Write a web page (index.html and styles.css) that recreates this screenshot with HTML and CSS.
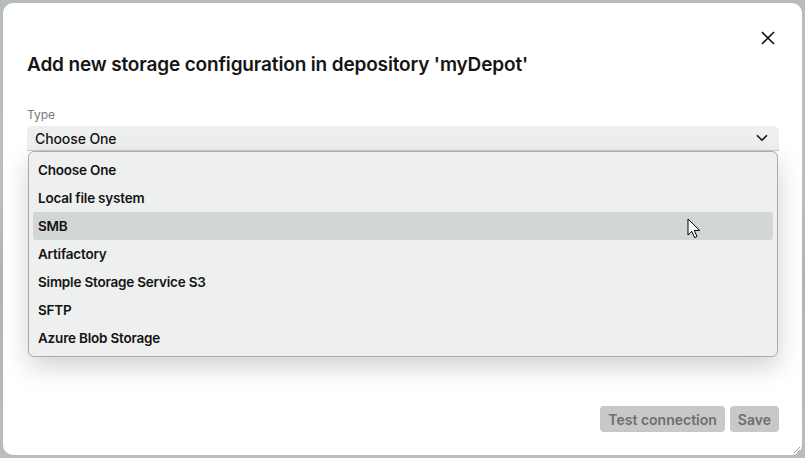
FILE: index.html
```html
<!DOCTYPE html>
<html lang="en">
<head>
<meta charset="utf-8">
<title>Add storage configuration</title>
<link rel="stylesheet" href="styles.css">
</head>
<body>
<div class="backdrop">
  <div class="modal">
    <div class="modal-top">
      <button class="close" aria-label="Close">
        <svg width="14" height="14" viewBox="0 0 14 14"><path d="M1 1L13 13M13 1L1 13" stroke="#111" stroke-width="1.6" fill="none"/></svg>
      </button>
    </div>
    <h1 class="title">Add new storage configuration in depository 'myDepot'</h1>
    <div class="field">
      <label class="label">Type</label>
      <div class="select-wrap">
        <div class="select">
          <span>Choose One</span>
          <svg class="chev" width="12" height="8" viewBox="0 0 12 8"><path d="M1 1.2L6 6.2L11 1.2" stroke="#111" stroke-width="1.6" fill="none"/></svg>
        </div>
        <ul class="menu">
          <li class="item">Choose One</li>
          <li class="item">Local file system</li>
          <li class="item hover">SMB</li>
          <li class="item">Artifactory</li>
          <li class="item">Simple Storage Service S3</li>
          <li class="item">SFTP</li>
          <li class="item">Azure Blob Storage</li>
        </ul>
        <svg class="cursor" width="14" height="21" viewBox="0 0 14 21"><path d="M1 1V17L4.8 13.4L7.6 19.6L10 18.5L7.3 12.4H12.6Z" fill="#fff" stroke="#000" stroke-width="1" stroke-linejoin="round"/></svg>
      </div>
    </div>
    <div class="footer">
      <button class="btn">Test connection</button>
      <button class="btn">Save</button>
    </div>
    <svg class="grip" width="8" height="8" viewBox="0 0 8 8"><path d="M7 1L1 7M7 4L4 7" stroke="#9a9a9a" stroke-width="1"/></svg>
  </div>
</div>
</body>
</html>
```
FILE: styles.css
```css
* { box-sizing: border-box; }
html, body { margin: 0; padding: 0; }
body {
  width: 805px;
  height: 458px;
  overflow: hidden;
  font-family: Inter, "Open Sans", sans-serif;
  color: #161616;
}
.backdrop {
  width: 805px;
  height: 458px;
  padding: 3px;
  background: linear-gradient(180deg, #b6bdba 0%, #b9c0bd 40%, #aeb5b2 60%, #b7bebb 100%);
}
.modal {
  position: relative;
  height: 452px;
  background: #fff;
  border-radius: 10px;
  padding: 0 23px 23px 24px;
  display: flex;
  flex-direction: column;
}
.modal-top {
  display: flex;
  justify-content: flex-end;
  padding-top: 28px;
  margin-right: 4px;
  height: 43px;
}
.close {
  border: 0;
  background: transparent;
  padding: 0;
  width: 14px;
  height: 14px;
  display: flex;
}
.title {
  margin: 7px 0 0 0;
  font-size: 19px;
  font-weight: 600;
  line-height: 24px;
  letter-spacing: -0.15px;
  color: #151515;
}
.field {
  margin-top: 31px;
  display: flex;
  flex-direction: column;
}
.label {
  font-size: 12px;
  line-height: 14px;
  color: #7a7a7a;
  margin-bottom: 4px;
}
.select-wrap { position: relative; }
.select {
  height: 25px;
  background: #eef0ef;
  border-radius: 5px 5px 0 0;
  border-bottom: 1px solid #c9cbca;
  display: flex;
  align-items: center;
  justify-content: space-between;
  padding: 0 11px 0 8px;
  font-size: 14px;
  font-weight: 500;
  letter-spacing: -0.1px;
  color: #151515;
}
.chev { display: block; }
.menu {
  position: absolute;
  top: 25px;
  left: 1px;
  right: 1px;
  margin: 0;
  padding: 4px;
  list-style: none;
  background: #edf0ef;
  border: 1px solid #aaabaa;
  border-radius: 6px;
  box-shadow: 0 10px 26px rgba(0, 0, 0, 0.18);
  z-index: 2;
}
.item {
  height: 28px;
  line-height: 28px;
  padding-left: 5px;
  font-size: 13.5px;
  font-weight: 600;
  letter-spacing: -0.2px;
  color: #141414;
  border-radius: 3px;
}
.item.hover { background: #d2d6d5; }
.cursor {
  position: absolute;
  left: 660px;
  top: 92px;
  z-index: 3;
}
.footer {
  margin-top: auto;
  display: flex;
  justify-content: flex-end;
  gap: 5px;
}
.btn {
  height: 26px;
  border: 0;
  border-radius: 4px;
  background: #c8c8c8;
  color: #6e6e6e;
  font-family: inherit;
  font-size: 14px;
  font-weight: 600;
  padding: 0 8px;
}
.grip {
  position: absolute;
  right: 1px;
  bottom: 1px;
}
```
